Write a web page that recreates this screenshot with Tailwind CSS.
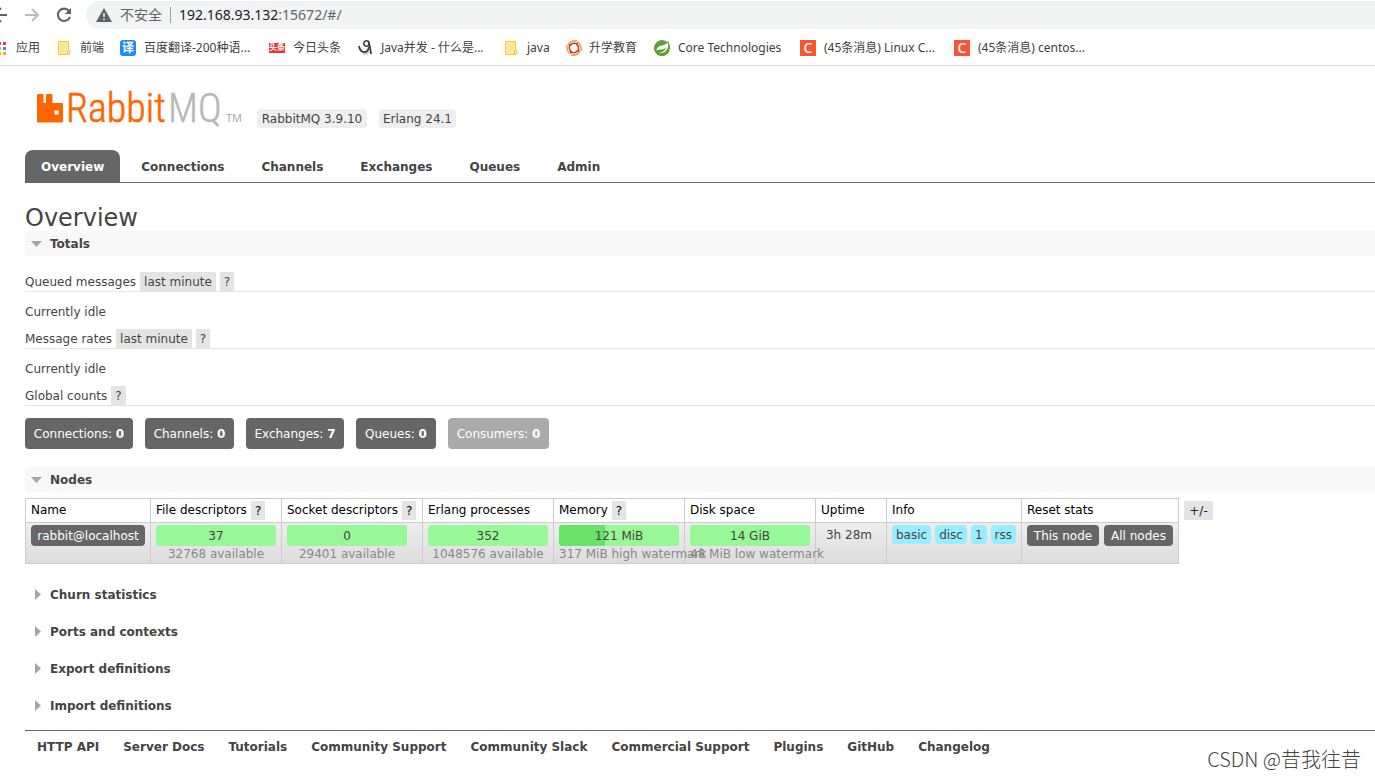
<!DOCTYPE html>
<html lang="zh-CN">
<head>
<meta charset="utf-8">
<title>RabbitMQ Management</title>
<script src="https://cdn.jsdelivr.net/npm/@tailwindcss/browser@4"></script>
</head>
<body class="relative min-h-screen overflow-x-hidden bg-white font-['Verdana','DejaVu_Sans','Noto_Sans_CJK_SC',sans-serif] text-xs text-[#444]">

<!-- Browser toolbar -->
<div class="border-b border-[#d9dadc] font-['Noto_Sans','Noto_Sans_CJK_SC',sans-serif] text-[#3c4043]">
  <div class="flex h-[30px] items-center">
    <button aria-label="Back" class="w-6"><svg class="block" width="10" height="16" viewBox="0 0 10 16" fill="none" stroke="#5f6368" stroke-width="2"><path d="M-7 8H7M1 1L-6 8L1 15"/></svg></button>
    <button aria-label="Forward" class="w-8"><svg class="block" width="16" height="16" viewBox="0 0 16 16" fill="none" stroke="#babcbe" stroke-width="2"><path d="M1 8H14M8 2L14 8L8 14"/></svg></button>
    <button aria-label="Reload" class="w-[30px]"><svg class="block" width="16" height="16" viewBox="0 0 16 16"><path d="M13.2 4.2A6.2 6.2 0 1 0 14 9.8" fill="none" stroke="#5f6368" stroke-width="2.1"/><path d="M15 .8V7H8.800z" fill="#5f6368"/></svg></button>
    <div class="flex h-7 flex-1 items-center rounded-l-full bg-[#f1f3f4] pl-[10px] text-sm text-[#5f6368]">
      <svg width="16" height="14" viewBox="0 0 16 14"><path d="M8 0L16 14H0z" fill="#5f6368"/><path d="M7.200 5h1.600v4H7.200zM7.200 10.400h1.600V12H7.200z" fill="#f1f3f4"/></svg>
      <span class="ml-2">不安全</span>
      <span class="mx-2 h-4 w-px bg-[#9aa0a6]"></span>
      <span><span class="text-[#202124]">192.168.93.132</span>:15672/#/</span>
    </div>
  </div>
  <nav aria-label="Bookmarks" class="flex h-[35px] items-center whitespace-nowrap">
    <a href="#" class="flex w-[57px] items-center gap-2"><svg width="8" height="16" viewBox="0 0 8 16"><path d="M0 2h1v3H0zM3 2h3v3H3z" fill="#ea4335"/><path d="M0 7h1v3H0z" fill="#fa9b1e"/><path d="M3 7h3v3H3z" fill="#4285f4"/><path d="M0 12h1v3H0zM3 12h3v3H3z" fill="#f9ab00"/></svg>应用</a>
    <a href="#" class="flex w-[63px] items-center gap-2"><svg width="15" height="16" viewBox="0 0 15 16"><path d="M1.500 1.500h10v9h1.500v3h-1v1H1.500z" fill="#ffe794" stroke="#ebc751"/><path d="M10.500 14v-3.500" stroke="#ebc751"/></svg>前端</a>
    <a href="#" class="flex w-[149px] items-center gap-2"><span class="flex size-4 items-center justify-center rounded-[3px] bg-[#1d8cf8] text-xs font-bold text-white">译</span>百度翻译-200种语...</a>
    <a href="#" class="flex w-[89px] items-center gap-2"><span class="flex h-[10px] w-4 items-center justify-center bg-[#f3302f] text-[8px] font-bold text-white">头条</span>今日头条</a>
    <a href="#" class="flex w-[146px] items-center gap-[7px]"><svg width="16" height="16" viewBox="0 0 16 16" fill="none" stroke="#3c3c3c"><path d="M1 6Q2 11 5 12Q10 13 11 7" stroke-width="1.800"/><circle cx="8.500" cy="3.500" r="2.700" stroke-width="1.400"/><path d="M10.500 2Q12.500 7 13 14" stroke-width="1.800"/><path d="M5 14.500Q10 14 12 11" stroke="#aaa"/></svg>Java并发 - 什么是...</a>
    <a href="#" class="flex w-[62px] items-center gap-2"><svg width="15" height="16" viewBox="0 0 15 16"><path d="M1.500 1.500h10v9h1.500v3h-1v1H1.500z" fill="#ffe794" stroke="#ebc751"/><path d="M10.500 14v-3.500" stroke="#ebc751"/></svg>java</a>
    <a href="#" class="flex w-[88px] items-center gap-[7px]"><svg width="16" height="16" viewBox="0 0 16 16" fill="none" stroke-width="1.500"><g stroke="#c8323c"><path d="M4 6Q6 2 12 4"/><path d="M10 4Q14 6 12 12"/><path d="M12 10Q10 14 4 12"/><path d="M6 12Q2 10 4 4"/></g><g stroke="#e9a13b"><path d="M2 5Q5 0 11 1"/><path d="M11 2Q16 5 15 11"/><path d="M14 11Q11 16 5 15"/><path d="M5 14Q0 11 1 5"/></g></svg>升学教育</a>
    <a href="#" class="flex w-[146px] items-center gap-2"><svg width="16" height="16" viewBox="0 0 16 16"><path d="M14.300 1Q16 5 16 8A8 8 0 1 1 13 1.900z" fill="#5fa136"/><path d="M2.500 10.500C3 4 10 7 14 2.500C15 9 12 14 3.500 13C8 13 11 11 13 7.500C10 10 6 9 2.500 10.500z" fill="#fff"/></svg>Core Technologies</a>
    <a href="#" class="flex w-[154px] items-center gap-2"><span class="flex size-4 items-center justify-center bg-[#fc5531] text-sm font-medium text-white">C</span>(45条消息) Linux C...</a>
    <a href="#" class="flex items-center gap-2"><span class="flex size-4 items-center justify-center bg-[#fc5531] text-sm font-medium text-white">C</span>(45条消息) centos...</a>
  </nav>
</div>

<div class="pl-[25px]">
  <header>
    <div class="flex h-[84px] items-end gap-3 pb-[22px] pl-3">
      <a href="#" aria-label="RabbitMQ" class="block">
        <svg class="block overflow-visible" width="208" height="50" viewBox="0 -10 208 50" font-family="'Roboto Condensed','Liberation Sans Narrow',sans-serif">
          <path d="M0 7Q0 6 1 6H5.500Q6.500 6 6.500 7V15H9V7Q9 6 10 6H14.500Q15.500 6 15.500 7V15H25Q26 15 26 16V33.500Q26 34.500 25 34.500H1Q0 34.500 0 33.500zM17.500 22.500V26.500H21.500V22.500z" fill="#f60" fill-rule="evenodd"/>
          <text x="29" y="34" font-size="40" font-weight="300" fill="#f60" stroke="#f60" stroke-width=".6">Rabbit</text>
          <text x="131" y="34" font-size="40" font-weight="300" fill="#b7b7b7" stroke="#b7b7b7" stroke-width=".4">MQ</text>
          <text x="189" y="34" font-size="11" font-family="'Open Sans',sans-serif" fill="#a5a5a5">TM</text>
        </svg>
      </a>
      <span class="flex h-[19px] w-[110px] items-center justify-center rounded bg-[#eee]">RabbitMQ 3.9.10</span>
      <span class="flex h-[19px] w-[77px] items-center justify-center rounded bg-[#eee]">Erlang 24.1</span>
    </div>
    <nav aria-label="Main" class="flex gap-[5px] border-b border-[#666] leading-[34px] font-bold">
      <a href="#" class="h-8 rounded-t-lg bg-[#666] px-4 text-white">Overview</a>
      <a href="#" class="h-8 px-4">Connections</a>
      <a href="#" class="h-8 px-4">Channels</a>
      <a href="#" class="h-8 px-4">Exchanges</a>
      <a href="#" class="h-8 px-4">Queues</a>
      <a href="#" class="h-8 px-4">Admin</a>
    </nav>
  </header>

  <main>
    <h1 class="pt-[22px] text-2xl leading-[26px]">Overview</h1>
    <section>
      <h2 class="bg-[#f8f8f8] font-bold"><button class="flex h-[25px] w-full items-center gap-2 pl-[6px]"><svg width="11" height="6" viewBox="0 0 11 6"><path d="M0 0H11L5.500 6z" fill="#a5a5a5"/></svg>Totals</button></h2>
      <div class="mt-4 flex h-5 gap-1 border-b border-[#e4e4e4] leading-[17px] [&>*]:pt-[2px]"><h3>Queued messages</h3><button class="bg-[#e4e4e4] px-1">last minute</button><button class="bg-[#e4e4e4] px-1">?</button></div>
      <p class="flex h-[37px] items-center pt-[2px]">Currently idle</p>
      <div class="flex h-5 gap-1 border-b border-[#e4e4e4] leading-[17px] [&>*]:pt-[2px]"><h3>Message rates</h3><button class="bg-[#e4e4e4] px-1">last minute</button><button class="bg-[#e4e4e4] px-1">?</button></div>
      <p class="flex h-[37px] items-center pt-[2px]">Currently idle</p>
      <div class="flex h-5 gap-1 border-b border-[#e4e4e4] leading-[17px] [&>*]:pt-[2px]"><h3>Global counts</h3><button class="bg-[#e4e4e4] px-1">?</button></div>
      <div class="mt-3 flex gap-3 text-center leading-[33px] text-white">
        <a href="#" class="h-[31px] w-[108px] rounded bg-[#666]">Connections: <b>0</b></a>
        <a href="#" class="h-[31px] w-[89px] rounded bg-[#666]">Channels: <b>0</b></a>
        <a href="#" class="h-[31px] w-[98px] rounded bg-[#666]">Exchanges: <b>7</b></a>
        <a href="#" class="h-[31px] w-20 rounded bg-[#666]">Queues: <b>0</b></a>
        <span class="h-[31px] w-[101px] rounded bg-[#aaa]">Consumers: <b>0</b></span>
      </div>
    </section>

    <section class="mt-[18px]">
      <h2 class="bg-[#f8f8f8] font-bold"><button class="flex h-[25px] w-full items-center gap-2 pl-[6px]"><svg width="11" height="6" viewBox="0 0 11 6"><path d="M0 0H11L5.500 6z" fill="#a5a5a5"/></svg>Nodes</button></h2>
      <div class="mt-[6px] mb-[18px] flex items-start gap-[5px]">
        <table class="w-[1154px] table-fixed border-collapse whitespace-nowrap [&_td]:border-x [&_td]:border-[#ccc] [&_td]:px-[5px] [&_td]:pt-[2px] [&_td]:align-top [&_th]:border [&_th]:border-[#ccc] [&_th]:px-[5px] [&_th]:text-left [&_th]:leading-[21px] [&_th]:font-normal [&_th]:text-black">
          <colgroup><col class="w-[125px]"><col class="w-[131px]"><col class="w-[141px]"><col class="w-[131px]"><col class="w-[131px]"><col class="w-[131px]"><col class="w-[71px]"><col class="w-[135px]"><col></colgroup>
          <thead>
            <tr class="h-6">
              <th>Name</th>
              <th><span class="flex items-center gap-1">File descriptors <button class="h-[19px] bg-[#e4e4e4] px-1 pt-[2px] leading-[17px]">?</button></span></th>
              <th><span class="flex items-center gap-1">Socket descriptors <button class="h-[19px] bg-[#e4e4e4] px-1 pt-[2px] leading-[17px]">?</button></span></th>
              <th>Erlang processes</th>
              <th><span class="flex items-center gap-1">Memory <button class="h-[19px] bg-[#e4e4e4] px-1 pt-[2px] leading-[17px]">?</button></span></th>
              <th>Disk space</th>
              <th>Uptime</th>
              <th>Info</th>
              <th>Reset stats</th>
            </tr>
          </thead>
          <tbody>
            <tr class="h-[41px] border-b border-[#ccc] bg-linear-to-b from-[#eee] to-[#ddd]">
              <td><a href="#" class="flex h-[21px] w-[114px] items-center justify-center rounded bg-[#666] text-white">rabbit@localhost</a></td>
              <td><div class="w-[120px]"><div class="h-[21px] rounded-[3px] bg-[#98f898] text-center leading-[23px]">37</div><div class="text-center leading-[17px] text-[#888]">32768 available</div></div></td>
              <td><div class="w-[120px]"><div class="h-[21px] rounded-[3px] bg-[#98f898] text-center leading-[23px]">0</div><div class="text-center leading-[17px] text-[#888]">29401 available</div></div></td>
              <td><div class="w-[120px]"><div class="h-[21px] rounded-[3px] bg-[#98f898] text-center leading-[23px]">352</div><div class="text-center leading-[17px] text-[#888]">1048576 available</div></div></td>
              <td><div class="w-[120px]"><div class="h-[21px] rounded-[3px] bg-linear-to-r from-[#6ae26a] from-38% to-[#98f898] to-38% text-center leading-[23px]">121 MiB</div><div class="text-center leading-[17px] text-[#888]">317 MiB high watermark</div></div></td>
              <td><div class="w-[120px]"><div class="h-[21px] rounded-[3px] bg-[#98f898] text-center leading-[23px]">14 GiB</div><div class="text-center leading-[17px] text-[#888]">48 MiB low watermark</div></div></td>
              <td><div class="pr-1 text-center leading-[21px]">3h 28m</div></td>
              <td><div class="flex gap-1 leading-[17px] [&>*]:pt-[2px]"><abbr class="rounded bg-[#98eeff] px-1">basic</abbr><abbr class="rounded bg-[#98eeff] px-1">disc</abbr><abbr class="rounded bg-[#98eeff] px-1">1</abbr><abbr class="rounded bg-[#98eeff] px-1">rss</abbr></div></td>
              <td><div class="flex gap-[5px] leading-[19px] text-white [&>*]:pt-[2px]"><button class="w-[72px] rounded bg-[#666]">This node</button><button class="w-[69px] rounded bg-[#666]">All nodes</button></div></td>
            </tr>
          </tbody>
        </table>
        <button class="mt-[3px] w-[29px] bg-[#e4e4e4] pt-[2px] leading-[17px] text-[#222]">+/-</button>
      </div>
    </section>

    <h2 class="mb-3 font-bold"><button class="flex h-[25px] items-center gap-[9px] pl-[10px]"><svg width="6" height="11" viewBox="0 0 6 11"><path d="M0 0V11L6 5.500z" fill="#a5a5a5"/></svg>Churn statistics</button></h2>
    <h2 class="mb-3 font-bold"><button class="flex h-[25px] items-center gap-[9px] pl-[10px]"><svg width="6" height="11" viewBox="0 0 6 11"><path d="M0 0V11L6 5.500z" fill="#a5a5a5"/></svg>Ports and contexts</button></h2>
    <h2 class="mb-3 font-bold"><button class="flex h-[25px] items-center gap-[9px] pl-[10px]"><svg width="6" height="11" viewBox="0 0 6 11"><path d="M0 0V11L6 5.500z" fill="#a5a5a5"/></svg>Export definitions</button></h2>
    <h2 class="mb-3 font-bold"><button class="flex h-[25px] items-center gap-[9px] pl-[10px]"><svg width="6" height="11" viewBox="0 0 6 11"><path d="M0 0V11L6 5.500z" fill="#a5a5a5"/></svg>Import definitions</button></h2>
  </main>

  <footer class="flex gap-6 border-t border-[#666] pt-2 pl-3 font-bold">
    <a href="#">HTTP API</a><a href="#">Server Docs</a><a href="#">Tutorials</a><a href="#">Community Support</a><a href="#">Community Slack</a><a href="#">Commercial Support</a><a href="#">Plugins</a><a href="#">GitHub</a><a href="#">Changelog</a>
  </footer>
</div>

<div class="absolute right-[14px] bottom-[5px] font-['Noto_Sans_CJK_SC',sans-serif] text-[20px] leading-7 font-light text-[#444] [text-shadow:-1px_-1px_0_#fff]">CSDN @昔我往昔</div>
</body>
</html>
